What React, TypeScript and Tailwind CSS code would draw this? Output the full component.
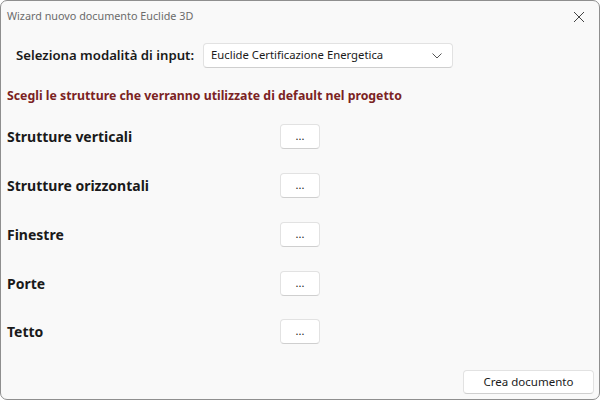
import React from "react";

const rows = ["Strutture verticali", "Strutture orizzontali", "Finestre", "Porte", "Tetto"];

export default function App() {
  return (
    <div className="w-[600px] h-[400px] bg-white" style={{ fontFamily: '"Noto Sans", "Open Sans", sans-serif' }}>
      <div className="w-[600px] h-[400px] bg-[#f9f9f9] border border-[#8f8f8f] rounded-[7px] flex flex-col relative overflow-hidden">
        <div className="h-[31px] flex items-center justify-between pl-[6px] pr-[14px]">
          <span className="text-[10.8px] text-[#6b6b6b]">Wizard nuovo documento Euclide 3D</span>
          <svg width="12" height="12" viewBox="0 0 12 12" className="mt-[1px]">
            <path d="M1 1 L11 11 M11 1 L1 11" stroke="#444" strokeWidth="1" />
          </svg>
        </div>
        <div className="flex items-center mt-[11px] pl-[15px] gap-[9px]">
          <span className="text-[13.2px] font-semibold text-[#1a1a1a]">Seleziona modalità di input:</span>
          <div className="w-[250px] h-[25px] bg-white border border-[#e2e2e2] border-b-[#cfcfcf] rounded-[4px] flex items-center justify-between pl-[7px] pr-[10px]">
            <span className="text-[11.3px] text-[#1a1a1a]">Euclide Certificazione Energetica</span>
            <svg width="10" height="6" viewBox="0 0 10 6">
              <path d="M0.5 0.5 L5 5 L9.5 0.5" stroke="#555" strokeWidth="1" fill="none" />
            </svg>
          </div>
        </div>
        <div className="mt-[19px] pl-[6px] text-[12.3px] font-bold text-[#7b2323]">
          Scegli le strutture che verranno utilizzate di default nel progetto
        </div>
        <div className="flex flex-col mt-[19px] gap-[23.75px]">
          {rows.map((r) => (
            <div key={r} className="flex items-center h-[25px]">
              <span className="w-[279px] pl-[6px] text-[14px] font-bold text-[#1a1a1a]">{r}</span>
              <div className="w-[40px] h-[25px] bg-white border border-[#e2e2e2] border-b-[#cfcfcf] rounded-[4px] flex items-center justify-center text-[11px] text-[#222] leading-none pb-[2px]">
                ...
              </div>
            </div>
          ))}
        </div>
        <div className="flex-1" />
        <div className="flex justify-end pr-[5px] pb-[5px]">
          <div className="w-[131px] h-[24px] bg-white border border-[#e2e2e2] border-b-[#cfcfcf] rounded-[4px] flex items-center justify-center text-[11.5px] text-[#1a1a1a]">
            Crea documento
          </div>
        </div>
      </div>
    </div>
  );
}
